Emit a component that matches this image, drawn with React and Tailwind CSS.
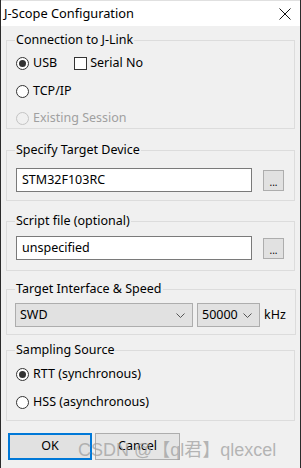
import React from 'react';

// Boîte de dialogue J-Scope (style Windows)

const Radio = ({ checked, disabled, label, className = '' }) => (
  <label className={`flex items-center h-[16px] ${className}`}>
    <span
      className={`w-[13px] h-[13px] rounded-full border flex items-center justify-center ${
        disabled ? 'border-[#c4c4c4] bg-[#f0f0f0]' : 'border-[#333333] bg-white'
      }`}
    >
      {checked && <span className="w-[7px] h-[7px] rounded-full bg-[#333333]" />}
    </span>
    <span className={`ml-[4px] ${disabled ? 'text-[#a0a0a0]' : 'text-black'}`}>{label}</span>
  </label>
);

const Group = ({ title, className = '', children }) => (
  <fieldset className={`w-[289px] ml-[5px] border border-[#dcdcdc] px-[9px] ${className}`}>
    <legend className="ml-[-1px] px-[1px] leading-[16px] text-black">{title}</legend>
    {children}
  </fieldset>
);

const Chevron = () => (
  <svg width="9" height="5" viewBox="0 0 9 5" className="text-[#555]">
    <path d="M0.5 0.5 L4.5 4.5 L8.5 0.5" fill="none" stroke="currentColor" strokeWidth="1" />
  </svg>
);

const App = () => {
  return (
    <div className="relative w-[301px] h-[468px] bg-[#f0f0f0] border-l border-r border-[#2b2b2b] overflow-hidden font-['Noto_Sans','Segoe_UI',sans-serif] text-[12.5px] text-black">
      <div className="h-[26px] bg-white flex items-center justify-between pl-[3px] pr-[9px] border-t border-[#e0e0e0]">
        <span className="text-[12.8px] leading-none">J-Scope Configuration</span>
        <svg width="12" height="12" viewBox="0 0 12 12">
          <path d="M0.5 0.5 L11.5 11.5 M11.5 0.5 L0.5 11.5" stroke="#111" strokeWidth="1" />
        </svg>
      </div>

      <Group title="Connection to J-Link" className="mt-[6px] pb-[2px]">
        <div className="flex items-center mt-[7px]">
          <Radio checked label="USB" />
          <label className="flex items-center h-[16px] ml-[17px]">
            <span className="w-[13px] h-[13px] border border-[#333333] bg-white" />
            <span className="ml-[3px]">Serial No</span>
          </label>
        </div>
        <Radio label="TCP/IP" className="mt-[12px]" />
        <Radio disabled label="Existing Session" className="mt-[11px]" />
      </Group>

      <Group title="Specify Target Device" className="mt-[13px] pb-[8px]">
        <div className="flex items-center mt-[10px]">
          <div className="w-[236px] h-[24px] border border-[#7a7a7a] bg-white flex items-center pl-[5px]">
            STM32F103RC
          </div>
          <button className="ml-[11px] w-[21px] h-[21px] border border-[#adadad] bg-[#e1e1e1] flex items-end justify-center pb-[3px] text-[10px] leading-none">
            ...
          </button>
        </div>
      </Group>

      <Group title="Script file (optional)" className="mt-[12px] pb-[10px]">
        <div className="flex items-center mt-[7px]">
          <div className="w-[236px] h-[24px] border border-[#7a7a7a] bg-white flex items-center pl-[5px]">
            unspecified
          </div>
          <button className="ml-[11px] w-[21px] h-[21px] border border-[#adadad] bg-[#e1e1e1] flex items-end justify-center pb-[3px] text-[10px] leading-none">
            ...
          </button>
        </div>
      </Group>

      <Group title="Target Interface & Speed" className="mt-[10px] pb-[7px]">
        <div className="flex items-center mt-[6px] -ml-[1px]">
          <div className="w-[178px] h-[24px] border border-[#adadad] bg-[#e1e1e1] flex items-center justify-between pl-[4px] pr-[7px]">
            <span>SWD</span>
            <Chevron />
          </div>
          <div className="ml-[4px] w-[63px] h-[24px] border border-[#adadad] bg-[#e1e1e1] flex items-center justify-between pl-[4px] pr-[7px]">
            <span>50000</span>
            <Chevron />
          </div>
          <span className="ml-[4px]">kHz</span>
        </div>
      </Group>

      <Group title="Sampling Source" className="mt-[7px] pb-[10px]">
        <Radio checked label="RTT (synchronous)" className="mt-[8px]" />
        <Radio label="HSS (asynchronous)" className="mt-[12px]" />
      </Group>

      <div className="flex mt-[12px] ml-[7px]">
        <button className="w-[84px] h-[27px] border-2 border-[#0078d7] bg-[#e1e1e1] flex items-center justify-center">
          OK
        </button>
        <button className="ml-[3px] w-[85px] h-[27px] border border-[#adadad] bg-[#e5e5e5] flex items-center justify-center">
          Cancel
        </button>
      </div>

      <span className="absolute left-[77px] top-[438px] text-[18px] leading-[24px] text-[#a0a0a0]/75 font-['Liberation_Sans','Noto_Sans_CJK_SC',sans-serif] whitespace-nowrap">
        CSDN @【ql君】qlexcel
      </span>
    </div>
  );
};

export default App;
